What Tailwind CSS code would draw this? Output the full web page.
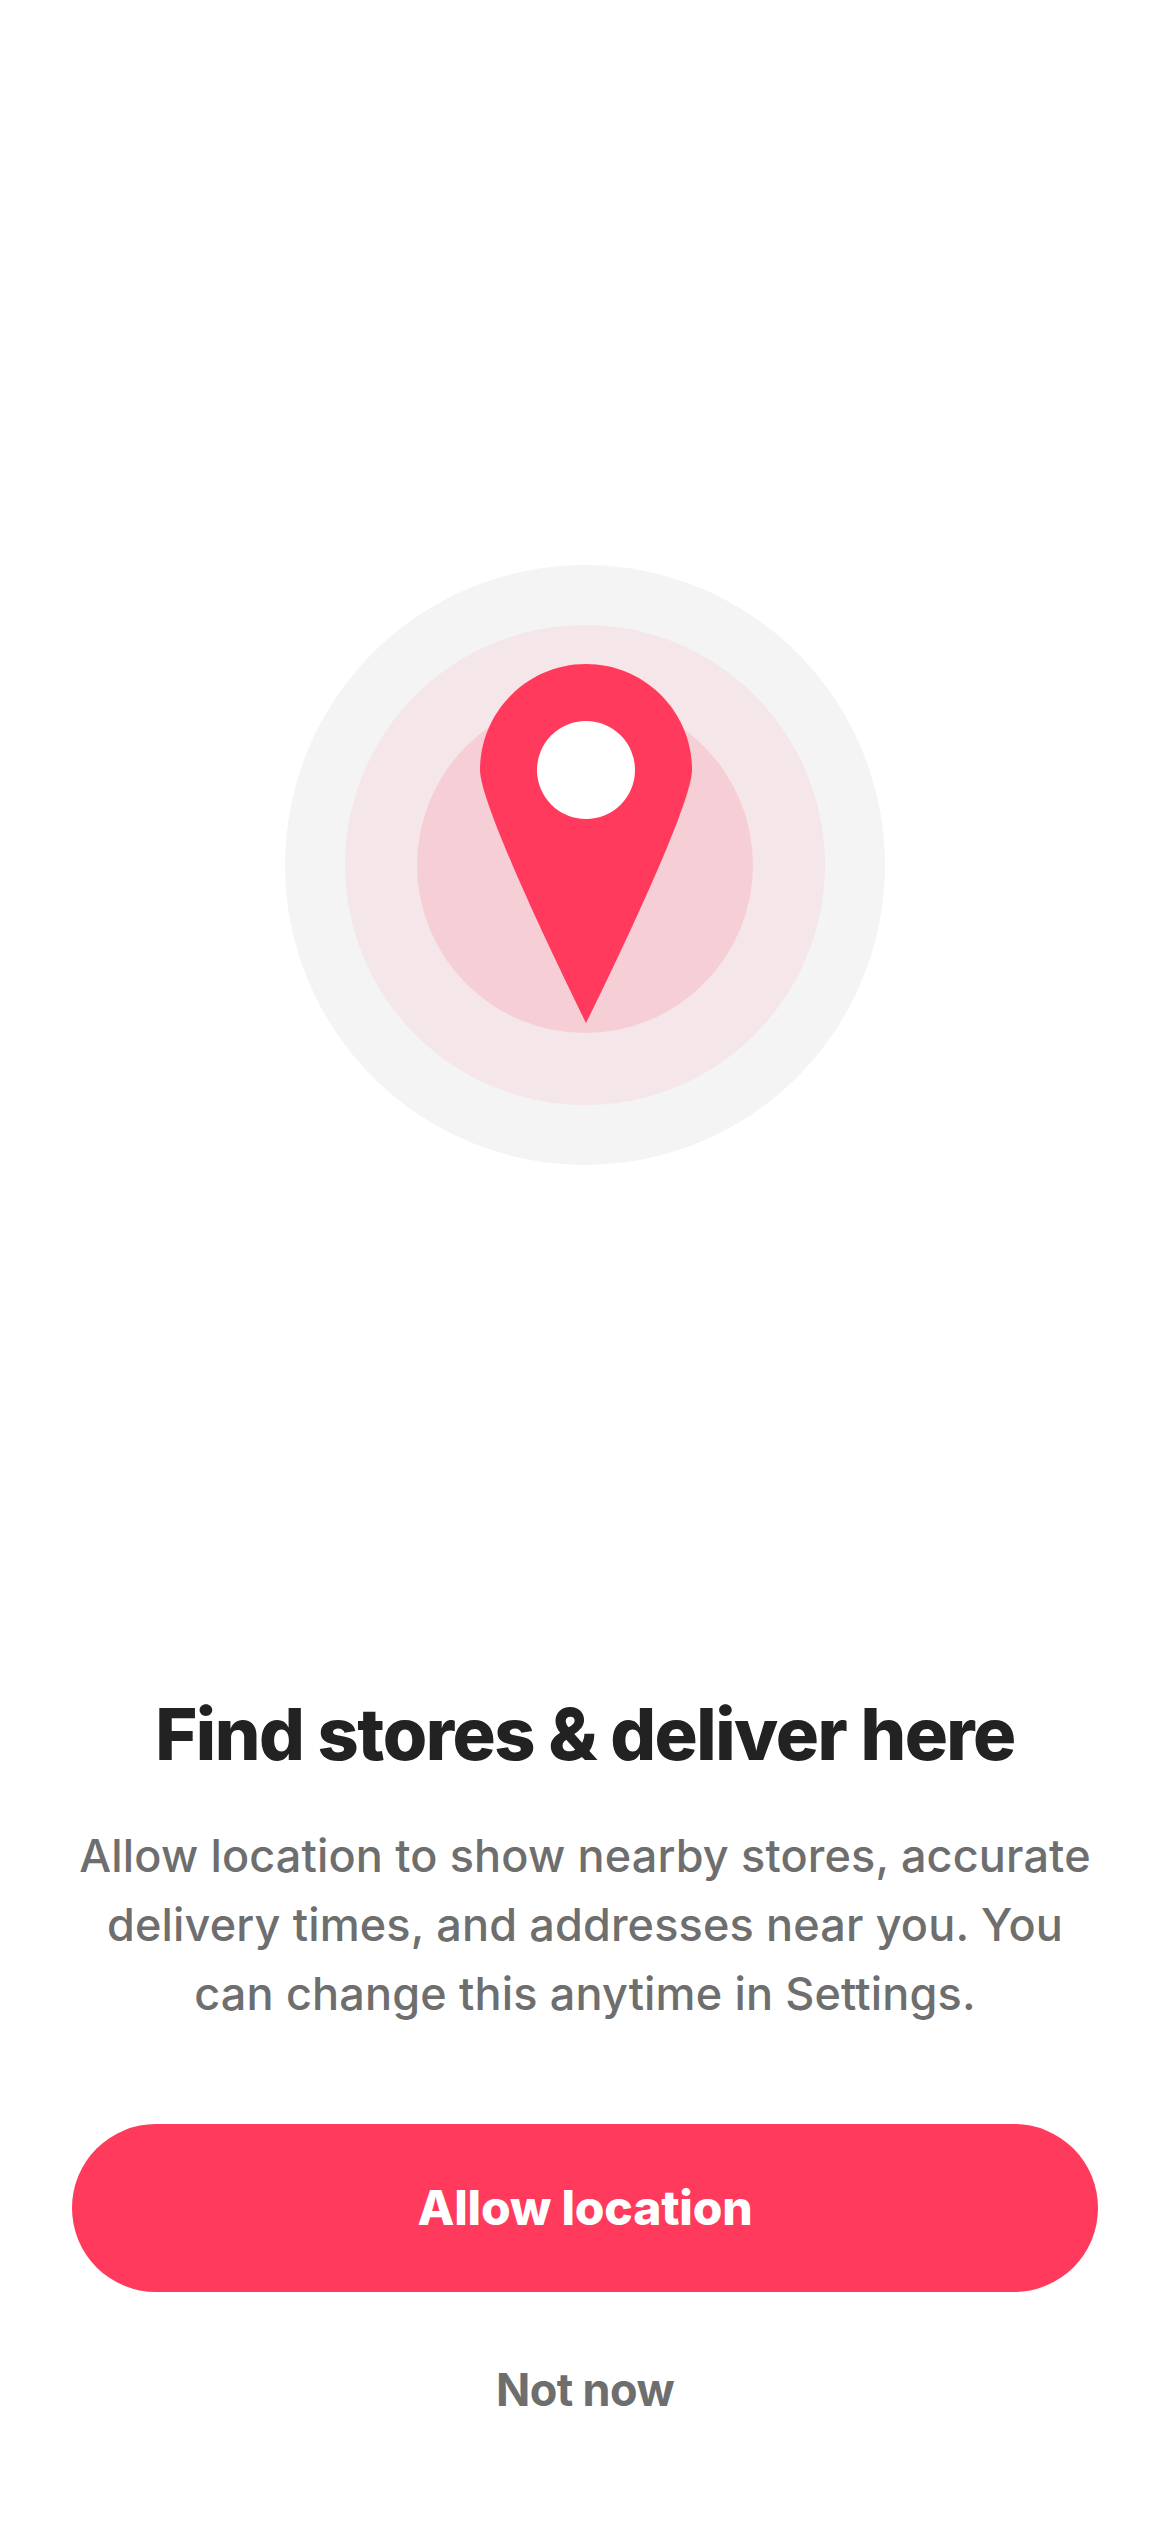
<!DOCTYPE html>
<html lang="en">
<head>
    <meta charset="UTF-8">
    <meta name="viewport" content="width=device-width, initial-scale=1.0">
    <title>Allow location</title>
    <script src="https://cdn.jsdelivr.net/npm/@tailwindcss/browser@4"></script>
</head>
<body class="bg-white font-['Inter',sans-serif]">
    <main class="flex flex-col items-center h-[2532px] overflow-hidden">
        <!-- Radar circles with pin -->
        <div class="relative mt-[565px] w-[600px] h-[600px] rounded-full bg-[#f4f4f4] flex items-center justify-center">
            <div class="w-[480px] h-[480px] rounded-full bg-[#f5e6ea] flex items-center justify-center">
                <div class="w-[336px] h-[336px] rounded-full bg-[#f6ced6]"></div>
            </div>
            <svg class="absolute left-[195px] top-[99px]" width="212" height="359" viewBox="0 0 212 359">
                <path fill="#ff3a5c" d="M106 0C164.5 0 212 47.5 212 106C212 146 106 359 106 359C106 359 0 146 0 106C0 47.5 47.5 0 106 0Z"/>
                <circle cx="106" cy="106" r="49" fill="#ffffff"/>
            </svg>
        </div>

        <!-- Copy -->
        <h1 class="mt-[525px] text-[72px] leading-[88px] font-extrabold tracking-[-1.5px] text-[#222222] whitespace-nowrap">Find stores &amp; deliver here</h1>
        <p class="mt-[43px] text-[45px] leading-[69px] font-medium tracking-[0.15px] text-[#6e6e6e] text-center whitespace-nowrap">
            Allow location to show nearby stores, accurate<br>
            delivery times, and addresses near you. You<br>
            can change this anytime in Settings.
        </p>

        <!-- Actions -->
        <button class="mt-[96px] w-[1026px] h-[168px] rounded-[84px] bg-[#ff3a5c] text-white text-[48px] font-extrabold tracking-[-0.2px]">Allow location</button>
        <button class="mt-[58px] h-[80px] text-[#6e6e6e] text-[45px] font-bold tracking-[-0.6px]">Not now</button>
    </main>
</body>
</html>
